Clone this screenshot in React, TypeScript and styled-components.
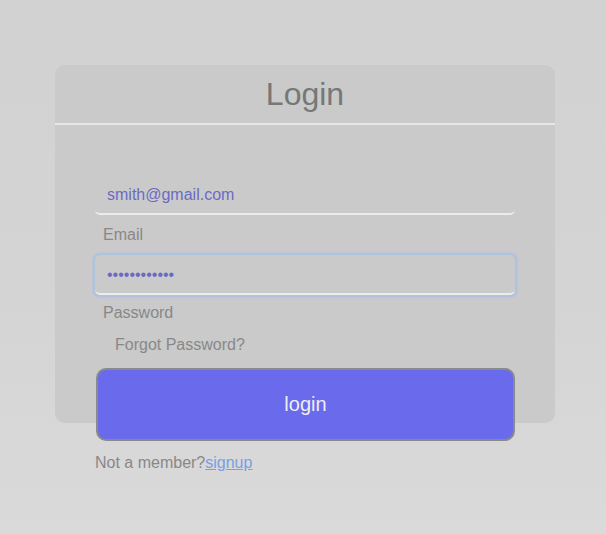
import React from "react";
import styled, { createGlobalStyle } from "styled-components";

const Global = createGlobalStyle`
  html, body { margin: 0; padding: 0; }
  body {
    min-height: 534px;
    background: linear-gradient(180deg, #d2d2d2 0%, #d4d4d4 55%, #dadada 100%);
    font-family: "Liberation Sans", Arial, sans-serif;
  }
`;

const Page = styled.div`
  padding: 65px 0 0 55px;
`;

const Card = styled.div`
  width: 500px;
  height: 358px;
  box-sizing: border-box;
  background: #cacaca;
  border-radius: 10px;
`;

const Title = styled.h1`
  margin: 0;
  height: 58px;
  line-height: 58px;
  text-align: center;
  font-size: 32px;
  font-weight: 400;
  color: #777777;
  border-bottom: 2px solid #e6e6e6;
`;

const Form = styled.form`
  display: flex;
  flex-direction: column;
  padding: 50px 40px 0 40px;
`;

const Input = styled.input<{ $focused?: boolean }>`
  box-sizing: border-box;
  width: 420px;
  height: 40px;
  padding: 1px 12px 0 12px;
  border: none;
  border-bottom: 2px solid #ececec;
  border-radius: 5px;
  background: transparent;
  font-family: "Liberation Sans", Arial, sans-serif;
  font-size: 16px;
  color: #6a6ac4;
  outline: none;
  box-shadow: ${(p) => (p.$focused ? "0 0 0 2px #b1c2df, 0 0 1px 3px rgba(177, 194, 223, 0.5)" : "none")};
`;

const Label = styled.label<{ $h: number }>`
  display: block;
  padding-left: 8px;
  height: ${(p) => p.$h}px;
  line-height: ${(p) => p.$h}px;
  font-size: 16px;
  color: #888888;
`;

const Forgot = styled.div`
  padding-left: 20px;
  height: 28px;
  line-height: 28px;
  font-size: 16px;
  color: #888888;
`;

const Button = styled.button`
  box-sizing: border-box;
  margin-top: 9px;
  margin-left: 1px;
  width: 419px;
  height: 73px;
  background: #6a6aec;
  border: 2px solid #8a8a8a;
  border-radius: 10px;
  color: #eeeeee;
  font-family: "Liberation Sans", Arial, sans-serif;
  font-size: 20px;
  cursor: pointer;
`;

const Footer = styled.p`
  margin: 11px 0 0 0;
  height: 22px;
  line-height: 22px;
  font-size: 16px;
  color: #888888;
`;

const SignupLink = styled.a`
  color: #7a9fe2;
  text-decoration: underline;
`;

export default function App() {
  return (
    <>
      <Global />
      <Page>
        <Card>
          <Title>Login</Title>
          <Form onSubmit={(e) => e.preventDefault()}>
            <Input id="email" type="text" defaultValue="smith@gmail.com" />
            <Label htmlFor="email" $h={40}>Email</Label>
            <Input id="password" type="password" defaultValue="smith1234567" $focused />
            <Label htmlFor="password" $h={36}>Password</Label>
            <Forgot>Forgot Password?</Forgot>
            <Button type="submit">login</Button>
            <Footer>
              Not a member?<SignupLink href="#">signup</SignupLink>
            </Footer>
          </Form>
        </Card>
      </Page>
    </>
  );
}
